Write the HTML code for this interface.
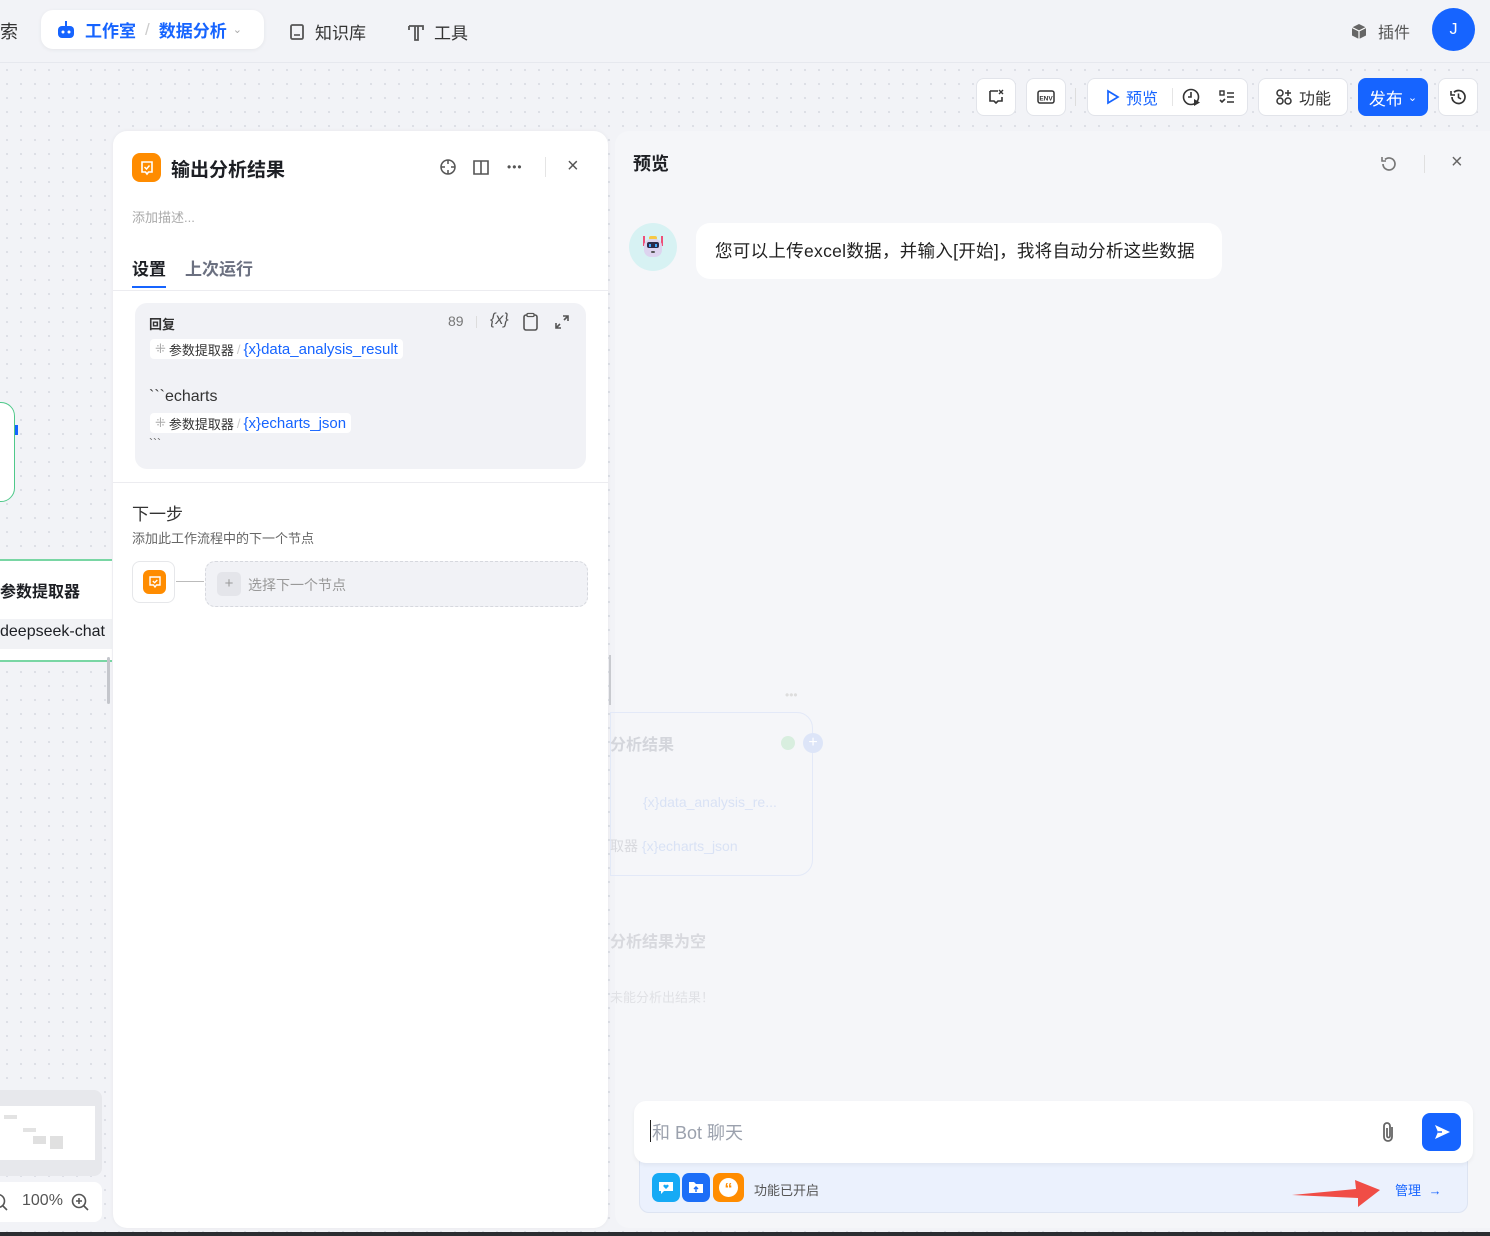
<!DOCTYPE html>
<html><head><meta charset="utf-8"><style>
*{box-sizing:border-box;margin:0;padding:0}
body{width:1490px;height:1236px;overflow:hidden;position:relative;background:#f2f3f7;font-family:"Liberation Sans","Noto Sans CJK SC",sans-serif;color:#1d1f24}
.abs{position:absolute}
.canvas{left:0;top:62px;width:1490px;height:1170px;background-color:#f2f3f7;background-image:radial-gradient(#dcdee5 1px,transparent 1.3px);background-size:14px 14px;border-top:1px solid #e6e8ee}
.btn{background:#fff;border:1px solid #e2e4ea;border-radius:8px;height:38px;top:78px;display:flex;align-items:center;justify-content:center;font-size:16px;color:#333}
.panel{background:#fff;border-radius:14px}
.tag{display:inline-flex;align-items:center;background:#fff;border-radius:4px;padding:0 5px;height:20px;font-size:13px;color:#333}
.tag b{font-weight:normal;color:#1664ff;font-size:15px}
</style></head><body>
<div class="abs" style="left:0;top:18px;font-size:18px;color:#333">索</div>
<div class="abs" style="left:41px;top:10px;width:223px;height:39px;background:#fff;border-radius:12px;box-shadow:0 1px 4px rgba(0,0,0,.06);display:flex;align-items:center;padding-left:14px;font-size:17px;font-weight:bold;color:#1664ff">
<svg width="22" height="20" viewBox="0 0 22 20"><rect x="3" y="6" width="16" height="12" rx="4" fill="#1664ff"/><rect x="10" y="1" width="2" height="5" fill="#1664ff"/><circle cx="8" cy="12" r="1.5" fill="#fff"/><circle cx="14" cy="12" r="1.5" fill="#fff"/></svg>
<span style="margin-left:8px">工作室</span><span style="color:#ccc;margin:0 9px;font-weight:normal">/</span><span>数据分析</span><span style="color:#aaa;font-size:11px;margin-left:6px;font-weight:normal">⌄</span></div>
<div class="abs" style="left:289px;top:19px;font-size:17px;color:#333;display:flex;align-items:center"><svg width="16" height="18"><rect x="2" y="2" width="12" height="14" rx="1.5" fill="none" stroke="#555" stroke-width="1.8"/><line x1="5" y1="12" x2="11" y2="12" stroke="#555" stroke-width="1.6"/></svg><span style="margin-left:10px">知识库</span></div>
<div class="abs" style="left:407px;top:19px;font-size:17px;color:#333;display:flex;align-items:center"><svg width="18" height="18"><path d="M2 3h14v4M2 3v4M8 3v14h3V3" fill="none" stroke="#555" stroke-width="1.8"/></svg><span style="margin-left:9px">工具</span></div>
<div class="abs" style="left:1350px;top:19px;font-size:16px;color:#555;display:flex;align-items:center"><svg width="18" height="18"><path d="M9 2l7 3.5v8L9 17l-7-3.5v-8z" fill="#666"/><path d="M2 5.5L9 9l7-3.5M9 9v8" stroke="#fff" stroke-width="1.2" fill="none"/></svg><span style="margin-left:10px">插件</span></div>
<div class="abs" style="left:1432px;top:8px;width:43px;height:43px;border-radius:50%;background:#1664ff;color:#fff;font-size:16px;display:flex;align-items:center;justify-content:center">J</div>

<div class="abs canvas"></div>

<div class="abs btn" style="left:976px;width:40px"><svg width="18" height="18"><path d="M3 3h8M3 3v10h4l2 2 2-2h4v-4" fill="none" stroke="#333" stroke-width="1.6"/><path d="M12 2l4 4M16 2l-4 4" stroke="#333" stroke-width="1.4"/></svg></div>
<div class="abs btn" style="left:1026px;width:40px"><svg width="20" height="18"><rect x="2" y="3" width="16" height="12" rx="2" fill="none" stroke="#333" stroke-width="1.5"/><text x="10" y="12.5" font-size="6.5" text-anchor="middle" font-family="Liberation Sans" font-weight="bold" fill="#333">ENV</text></svg></div>
<div class="abs" style="left:1075px;top:88px;width:1px;height:18px;background:#ddd"></div>
<div class="abs btn" style="left:1087px;width:161px;justify-content:flex-start;padding-left:18px;color:#1664ff"><svg width="14" height="16"><path d="M2 2l10 6-10 6z" fill="none" stroke="#1664ff" stroke-width="1.7"/></svg><span style="margin-left:6px">预览</span><span style="width:1px;height:18px;background:#e5e5e5;margin-left:14px"></span>
<svg style="margin-left:9px" width="20" height="20"><circle cx="9" cy="10" r="7.5" fill="none" stroke="#333" stroke-width="1.6"/><path d="M9 5v5h-3" fill="none" stroke="#333" stroke-width="1.6"/><path d="M12 12l6 3.5-6 3.5z" fill="#333"/></svg>
<svg style="margin-left:16px" width="18" height="18"><rect x="2" y="3" width="4" height="4" fill="none" stroke="#333" stroke-width="1.4"/><path d="M2 12l2 2 3-3M9 5h7M9 9h7M9 14h7" fill="none" stroke="#333" stroke-width="1.6"/></svg></div>
<div class="abs btn" style="left:1258px;width:90px"><svg width="18" height="18"><circle cx="5" cy="5" r="3" fill="none" stroke="#333" stroke-width="1.5"/><circle cx="5" cy="13" r="3" fill="none" stroke="#333" stroke-width="1.5"/><circle cx="13" cy="13" r="3" fill="none" stroke="#333" stroke-width="1.5"/><path d="M13 2v6M10 5h6" stroke="#333" stroke-width="1.5"/></svg><span style="margin-left:6px">功能</span></div>
<div class="abs btn" style="left:1358px;width:70px;background:#1664ff;border-color:#1664ff;color:#fff;font-size:17px">发布<span style="font-size:11px;margin-left:5px">⌄</span></div>
<div class="abs btn" style="left:1438px;width:40px"><svg width="18" height="18"><path d="M3 9a6.5 6.5 0 1 0 2-4.7" fill="none" stroke="#333" stroke-width="1.7"/><path d="M2 3v4h4" fill="none" stroke="#333" stroke-width="1.6"/><path d="M9.5 5.5v4l2.5 1.5" fill="none" stroke="#333" stroke-width="1.6"/></svg></div>

<div class="abs" style="left:-20px;top:402px;width:35px;height:100px;border:1.5px solid #4fc98a;border-radius:14px;background:#fff"></div>
<div class="abs" style="left:15px;top:425px;width:3px;height:10px;background:#1664ff"></div>
<div class="abs" style="left:0;top:559px;width:112px;height:103px;background:#fff;border-top:2px solid #79d6a4;border-bottom:2px solid #79d6a4"></div>
<div class="abs" style="left:0;top:578px;font-size:16px;font-weight:bold">参数提取器</div>
<div class="abs" style="left:0;top:619px;width:112px;height:30px;background:#f1f2f5"></div>
<div class="abs" style="left:0;top:623px;font-size:16px">deepseek-chat</div>
<div class="abs" style="left:107px;top:657px;width:3px;height:47px;background:#c4c6cc;border-radius:2px"></div>
<div class="abs" style="left:0;top:1090px;width:102px;height:86px;background:#e7e8ec;border-radius:0 8px 8px 0"></div>
<div class="abs" style="left:0;top:1106px;width:95px;height:54px;background:#fff"></div>
<div class="abs" style="left:4px;top:1115px;width:13px;height:4px;background:#e3e3e3"></div>
<div class="abs" style="left:23px;top:1128px;width:13px;height:4px;background:#e3e3e3"></div>
<div class="abs" style="left:33px;top:1136px;width:13px;height:8px;background:#e0e0e0"></div>
<div class="abs" style="left:50px;top:1136px;width:13px;height:13px;background:#e0e0e0"></div>
<div class="abs" style="left:0;top:1182px;width:102px;height:40px;background:#fff;border-radius:0 8px 8px 0"></div>
<div class="abs" style="left:22px;top:1192px;font-size:16px;color:#555">100%</div>
<svg class="abs" style="left:70px;top:1192px" width="20" height="20"><circle cx="9" cy="9" r="6.5" fill="none" stroke="#555" stroke-width="1.6"/><path d="M14 14l4 4M6 9h6M9 6v6" stroke="#555" stroke-width="1.6"/></svg>
<svg class="abs" style="left:-6px;top:1192px" width="16" height="20"><circle cx="4" cy="9" r="6.5" fill="none" stroke="#555" stroke-width="1.6"/><path d="M9 14l4 4" stroke="#555" stroke-width="1.6"/></svg>

<div class="abs panel" style="left:113px;top:131px;width:495px;height:1097px;box-shadow:0 0 4px rgba(0,0,0,.05)"></div>
<div class="abs" style="left:132px;top:153px;width:29px;height:29px;border-radius:8px;background:#ff8c00;display:flex;align-items:center;justify-content:center"><svg width="16" height="16"><path d="M3 2h10v10H9.5L8 14l-1.5-2H3z" fill="none" stroke="#fff" stroke-width="1.6"/><path d="M5.5 7l2 2 3-3.5" fill="none" stroke="#fff" stroke-width="1.5"/></svg></div>
<div class="abs" style="left:171px;top:155px;font-size:19px;font-weight:bold">输出分析结果</div>
<svg class="abs" style="left:439px;top:158px" width="18" height="18"><circle cx="9" cy="9" r="7" fill="none" stroke="#555" stroke-width="1.5"/><path d="M9 2v4M9 12v4M2 9h4M12 9h4" stroke="#555" stroke-width="1.5"/></svg>
<svg class="abs" style="left:472px;top:158px" width="20" height="18"><path d="M2 3h7v13H2zM9 3h7v13H9" fill="none" stroke="#555" stroke-width="1.6"/></svg>
<div class="abs" style="left:507px;top:160px;font-size:12px;color:#555;letter-spacing:1px">•••</div>
<div class="abs" style="left:545px;top:157px;width:1px;height:20px;background:#e5e5e5"></div>
<div class="abs" style="left:567px;top:155px;font-size:20px;color:#555">×</div>
<div class="abs" style="left:132px;top:207px;font-size:13px;color:#aaa">添加描述...</div>
<div class="abs" style="left:132px;top:255px;font-size:17px;font-weight:bold">设置</div>
<div class="abs" style="left:132px;top:286px;width:34px;height:2px;background:#1664ff"></div>
<div class="abs" style="left:185px;top:255px;font-size:17px;font-weight:bold;color:#6b7080">上次运行</div>
<div class="abs" style="left:113px;top:290px;width:495px;height:1px;background:#ececf0"></div>
<div class="abs" style="left:135px;top:303px;width:451px;height:166px;background:#f1f2f6;border-radius:12px"></div>
<div class="abs" style="left:149px;top:314px;font-size:13px;font-weight:bold;color:#333">回复</div>
<div class="abs" style="left:448px;top:313px;font-size:14px;color:#777">89</div>
<div class="abs" style="left:476px;top:316px;width:1px;height:12px;background:#ddd"></div>
<div class="abs" style="left:490px;top:311px;font-size:16px;color:#555;font-style:italic">{x}</div>
<svg class="abs" style="left:522px;top:312px" width="18" height="20"><rect x="2" y="3" width="13" height="15" rx="2" fill="none" stroke="#555" stroke-width="1.6"/><rect x="5" y="1.5" width="7" height="3" rx="1" fill="#fff" stroke="#555" stroke-width="1.3"/></svg>
<svg class="abs" style="left:554px;top:314px" width="16" height="16"><path d="M9 2h5v5M14 2l-4 4M7 14H2V9M2 14l4-4" fill="none" stroke="#555" stroke-width="1.6"/></svg>
<div class="abs tag" style="left:150px;top:339px"><span style="color:#aaa;margin-right:3px">⁜</span>参数提取器<span style="color:#ccc;margin:0 3px">/</span><b>{x}data_analysis_result</b></div>
<div class="abs" style="left:149px;top:388px;font-size:16px;color:#333">&#96;&#96;&#96;echarts</div>
<div class="abs tag" style="left:150px;top:413px"><span style="color:#aaa;margin-right:3px">⁜</span>参数提取器<span style="color:#ccc;margin:0 3px">/</span><b>{x}echarts_json</b></div>
<div class="abs" style="left:149px;top:436px;font-size:12px;color:#555">&#96;&#96;&#96;</div>
<div class="abs" style="left:113px;top:482px;width:495px;height:1px;background:#ececf0"></div>
<div class="abs" style="left:132px;top:500px;font-size:17px;color:#333">下一步</div>
<div class="abs" style="left:132px;top:528px;font-size:13px;color:#666">添加此工作流程中的下一个节点</div>
<div class="abs" style="left:132px;top:561px;width:43px;height:42px;border:1px solid #e6e7ea;border-radius:8px;background:#fff"></div>
<div class="abs" style="left:143px;top:570px;width:23px;height:24px;border-radius:6px;background:#ff8c00;display:flex;align-items:center;justify-content:center"><svg width="14" height="14"><path d="M2 2h10v8H8.5L7 12l-1.5-2H2z" fill="none" stroke="#fff" stroke-width="1.4"/><path d="M4.8 6l1.8 1.7L9.3 5" fill="none" stroke="#fff" stroke-width="1.3"/></svg></div>
<div class="abs" style="left:176px;top:581px;width:28px;height:1px;background:#bbb"></div>
<div class="abs" style="left:205px;top:561px;width:383px;height:46px;border:1px dashed #d6d8de;border-radius:10px;background:#f1f2f6"></div>
<div class="abs" style="left:217px;top:572px;width:24px;height:24px;border-radius:5px;background:#e4e5ea;color:#999;text-align:center;line-height:24px;font-size:15px">+</div>
<div class="abs" style="left:248px;top:575px;font-size:14px;color:#999">选择下一个节点</div>

<div class="abs" style="left:609px;top:655px;width:2px;height:50px;background:#c8cacf"></div>

<div class="abs" style="left:615px;top:131px;width:875px;height:1097px;background:#f5f6f9;border-radius:14px 0 0 14px"></div>
<div class="abs" style="left:633px;top:150px;font-size:18px;font-weight:bold">预览</div>
<svg class="abs" style="left:1379px;top:154px" width="20" height="20"><path d="M4 10a6 6 0 1 0 2-4.5" fill="none" stroke="#777" stroke-width="1.7"/><path d="M3 3v4h4" fill="none" stroke="#777" stroke-width="1.6"/></svg>
<div class="abs" style="left:1424px;top:155px;width:1px;height:18px;background:#e0e0e0"></div>
<div class="abs" style="left:1451px;top:151px;font-size:20px;color:#666">×</div>
<div class="abs" style="left:629px;top:223px;width:48px;height:48px;border-radius:50%;background:#d7f2f3"></div>
<svg class="abs" style="left:639px;top:233px" width="28" height="28"><rect x="4" y="3" width="2" height="10" fill="#ee4f78"/><rect x="22" y="3" width="2" height="10" fill="#ee4f78"/><rect x="10" y="3" width="8" height="4" rx="2" fill="#f6c945"/><rect x="5" y="6" width="18" height="18" rx="7" fill="#ddd4ef"/><rect x="8" y="9" width="12" height="6" rx="2" fill="#2c2c4a"/><rect x="10" y="11" width="2" height="3" fill="#3fa9ff"/><rect x="16" y="11" width="2" height="3" fill="#3fa9ff"/><rect x="12" y="18" width="4" height="2" rx="1" fill="#555"/></svg>
<div class="abs" style="left:696px;top:223px;width:526px;height:56px;background:#fff;border-radius:14px"></div>
<div class="abs" style="left:715px;top:238px;font-size:17.5px;color:#222;letter-spacing:0.3px">您可以上传excel数据，并输入[开始]，我将自动分析这些数据</div>

<div class="abs" style="left:610px;top:712px;width:203px;height:164px;border:1px solid #dfe6f7;border-radius:0 16px 16px 0;opacity:.8"></div>
<div class="abs" style="left:610px;top:731px;font-size:16px;font-weight:bold;color:#d4d6dc">分析结果</div>
<div class="abs" style="left:781px;top:736px;width:14px;height:14px;border-radius:50%;background:#d8eedf"></div>
<div class="abs" style="left:803px;top:733px;width:20px;height:20px;border-radius:50%;background:#dde5f8;color:#fff;text-align:center;line-height:20px;font-size:16px">+</div>
<div class="abs" style="left:643px;top:794px;font-size:14px;color:#d9e2f5">{x}data_analysis_re...</div>
<div class="abs" style="left:610px;top:836px;font-size:14px;color:#d8d9de">取器 <span style="color:#d9e2f5">{x}echarts_json</span></div>
<div class="abs" style="left:785px;top:688px;font-size:12px;color:#ddd">•••</div>
<div class="abs" style="left:610px;top:928px;font-size:16px;font-weight:bold;color:#d8d9de">分析结果为空</div>
<div class="abs" style="left:610px;top:987px;font-size:13px;color:#e0e1e5">未能分析出结果！</div>

<div class="abs" style="left:639px;top:1150px;width:829px;height:63px;background:#ebf1fd;border:1px solid #dde4f2;border-radius:10px"></div>
<div class="abs" style="left:634px;top:1101px;width:839px;height:62px;background:#fff;border-radius:12px;box-shadow:0 2px 4px rgba(0,0,0,.05)"></div>
<div class="abs" style="left:650px;top:1120px;width:1px;height:22px;background:#222"></div>
<div class="abs" style="left:652px;top:1119px;font-size:18px;color:#9ba1ad">和 Bot 聊天</div>
<svg class="abs" style="left:1379px;top:1120px" width="20" height="24"><path d="M13 7v10a4 4 0 0 1-8 0V6a3 3 0 0 1 6 0v10a1.5 1.5 0 0 1-3 0V8" fill="none" stroke="#666" stroke-width="1.8"/></svg>
<div class="abs" style="left:1422px;top:1113px;width:39px;height:38px;border-radius:8px;background:#1664ff"></div>
<svg class="abs" style="left:1432px;top:1122px" width="20" height="20"><path d="M3 3l15 7-15 7 3-7z" fill="#fff"/><path d="M6 10h4" stroke="#1664ff" stroke-width="1.5"/></svg>
<div class="abs" style="left:652px;top:1173px;width:28px;height:29px;border-radius:7px;background:#16aaf5"></div>
<div class="abs" style="left:682px;top:1173px;width:28px;height:29px;border-radius:7px;background:#1c6ef7"></div>
<div class="abs" style="left:713px;top:1173px;width:31px;height:29px;border-radius:7px;background:#ff8c00"></div>
<svg class="abs" style="left:656px;top:1177px" width="20" height="20"><path d="M3 5h14v9H8l-3 3v-3H3z" fill="#fff"/><path d="M10 12l-2.5-2.5a1.3 1.3 0 0 1 2.5-1a1.3 1.3 0 0 1 2.5 1z" fill="#16aaf5"/></svg>
<svg class="abs" style="left:686px;top:1177px" width="20" height="20"><path d="M3 5h5l2 2h7v9H3z" fill="#fff"/><path d="M10 15v-5M8 12l2-2 2 2" stroke="#1c6ef7" stroke-width="1.4" fill="none"/></svg>
<div class="abs" style="left:719px;top:1178px;width:19px;height:19px;border-radius:50%;background:#fff;color:#ff8c00;font-size:16px;font-weight:bold;text-align:center;line-height:24px">“</div>
<div class="abs" style="left:754px;top:1180px;font-size:13px;color:#555">功能已开启</div>
<svg class="abs" style="left:1290px;top:1178px" width="100" height="32"><path d="M2 17l64-6-1-9 25 10-22 17 0-9z" fill="#f04d46"/></svg>
<div class="abs" style="left:1395px;top:1180px;font-size:13px;color:#1664ff">管理 <span style="margin-left:4px">→</span></div>

<div class="abs" style="left:0;top:1232px;width:1490px;height:4px;background:#2b2d31"></div>
</body></html>
